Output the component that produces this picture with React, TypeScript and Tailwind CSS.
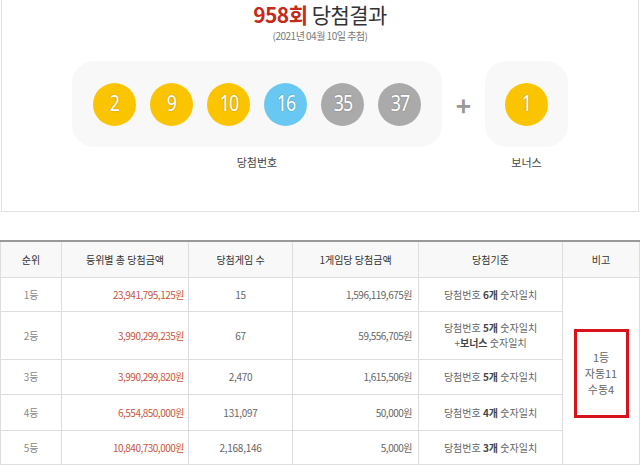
import React from 'react';

type Ball = { n: number; color: string };

const balls: Ball[] = [
  { n: 2, color: 'bg-[#fbc400]' },
  { n: 9, color: 'bg-[#fbc400]' },
  { n: 10, color: 'bg-[#fbc400]' },
  { n: 16, color: 'bg-[#69c8f2]' },
  { n: 35, color: 'bg-[#aaaaaa]' },
  { n: 37, color: 'bg-[#aaaaaa]' },
];

const LottoBall = ({ n, color }: Ball) => (
  <div
    className={`${color} w-[43px] h-[43px] rounded-full flex items-center justify-center text-white text-[21px] font-normal tracking-tighter [text-shadow:0_0_2px_rgba(0,0,0,0.3)]`}
    style={{ fontFamily: '"Noto Sans", sans-serif' }}
  >
    <span className="inline-block scale-x-[0.85]">{n}</span>
  </div>
);

type Row = {
  rank: string;
  total: string;
  count: string;
  each: string;
  h: string;
  criteria: React.ReactNode;
};

const rows: Row[] = [
  {
    rank: '1등',
    total: '23,941,795,125원',
    count: '15',
    each: '1,596,119,675원',
    h: 'h-[34px]',
    criteria: (
      <>당첨번호 <b className="font-bold text-[#444]">6개</b> 숫자일치</>
    ),
  },
  {
    rank: '2등',
    total: '3,990,299,235원',
    count: '67',
    each: '59,556,705원',
    h: 'h-[48px]',
    criteria: (
      <>
        당첨번호 <b className="font-bold text-[#444]">5개</b> 숫자일치
        <br />+<b className="font-bold text-[#444]">보너스</b> 숫자일치
      </>
    ),
  },
  {
    rank: '3등',
    total: '3,990,299,820원',
    count: '2,470',
    each: '1,615,506원',
    h: 'h-[35px]',
    criteria: (
      <>당첨번호 <b className="font-bold text-[#444]">5개</b> 숫자일치</>
    ),
  },
  {
    rank: '4등',
    total: '6,554,850,000원',
    count: '131,097',
    each: '50,000원',
    h: 'h-[36px]',
    criteria: (
      <>당첨번호 <b className="font-bold text-[#444]">4개</b> 숫자일치</>
    ),
  },
  {
    rank: '5등',
    total: '10,840,730,000원',
    count: '2,168,146',
    each: '5,000원',
    h: 'h-[34px]',
    criteria: (
      <>당첨번호 <b className="font-bold text-[#444]">3개</b> 숫자일치</>
    ),
  },
];

export default function App() {
  return (
    <div
      className="w-[640px] h-[466px] bg-white overflow-hidden text-[#666]"
      style={{ fontFamily: '"Noto Sans CJK KR", "Noto Sans", sans-serif' }}
    >
      {/* 회차 결과 카드 */}
      <div className="mx-px border-x border-b border-[#e2e2e2] pb-[41px]">
        <h2 className="text-center text-[21px] leading-[28px] tracking-tight text-[#333]">
          <strong className="font-bold text-[#c42b1c]">958회</strong> 당첨결과
        </h2>
        <p className="mt-px text-center text-[10px] leading-[14px] tracking-tighter text-[#777]">
          (2021년 04월 10일 추첨)
        </p>

        <div className="mt-[18px] flex justify-center">
          <div className="flex flex-col items-center">
            <div className="w-[370px] h-[86px] rounded-[22px] bg-[#f8f8f8] flex items-center gap-[14px] px-[21px]">
              {balls.map((b) => (
                <LottoBall key={b.n} {...b} />
              ))}
            </div>
            <span className="mt-[7px] text-[11px] leading-[16px] text-[#444]">당첨번호</span>
          </div>
          <div className="w-[43px] h-[86px] flex items-center justify-center text-[#999] text-[26px] font-bold">
            +
          </div>
          <div className="flex flex-col items-center">
            <div className="w-[83px] h-[86px] rounded-[22px] bg-[#f8f8f8] flex items-center justify-center">
              <LottoBall n={1} color="bg-[#fbc400]" />
            </div>
            <span className="mt-[7px] text-[11px] leading-[16px] text-[#444]">보너스</span>
          </div>
        </div>
      </div>

      {/* 등위별 당첨 정보 */}
      <table className="mt-[28px] w-[639px] table-fixed border-collapse text-[10px] leading-[15px]">
        <colgroup>
          <col className="w-[61px]" />
          <col className="w-[127px]" />
          <col className="w-[104px]" />
          <col className="w-[126px]" />
          <col className="w-[144px]" />
          <col className="w-[77px]" />
        </colgroup>
        <thead>
          <tr className="h-[36px] bg-[#f8f8f8] border-t-2 border-[#999] text-[#333]">
            <th className="font-normal border border-t-0 border-[#ddd]">순위</th>
            <th className="font-normal border border-t-0 border-[#ddd]">등위별 총 당첨금액</th>
            <th className="font-normal border border-t-0 border-[#ddd]">당첨게임 수</th>
            <th className="font-normal border border-t-0 border-[#ddd]">1게임당 당첨금액</th>
            <th className="font-normal border border-t-0 border-[#ddd]">당첨기준</th>
            <th className="font-normal border border-t-0 border-[#ddd]">비고</th>
          </tr>
        </thead>
        <tbody>
          {rows.map((r, i) => (
            <tr key={r.rank} className={r.h}>
              <td className="border border-[#ddd] text-center text-[#888]">{r.rank}</td>
              <td className="border border-[#ddd] text-right pr-[4px] tracking-tighter text-[#c8553d]">
                {r.total}
              </td>
              <td className="border border-[#ddd] text-center tracking-tight">{r.count}</td>
              <td className="border border-[#ddd] text-right pr-[6px] tracking-tighter">{r.each}</td>
              <td className="border border-[#ddd] text-center">{r.criteria}</td>
              {i === 0 && (
                <td rowSpan={5} className="border border-[#ddd] align-middle">
                  <div className="mx-auto mt-[5px] w-[55px] h-[89px] border-[3px] border-[#d7141e] flex items-center justify-center text-center text-[11px] leading-[16px]">
                    1등
                    <br />
                    자동11
                    <br />
                    수동4
                  </div>
                </td>
              )}
            </tr>
          ))}
        </tbody>
      </table>
    </div>
  );
}
